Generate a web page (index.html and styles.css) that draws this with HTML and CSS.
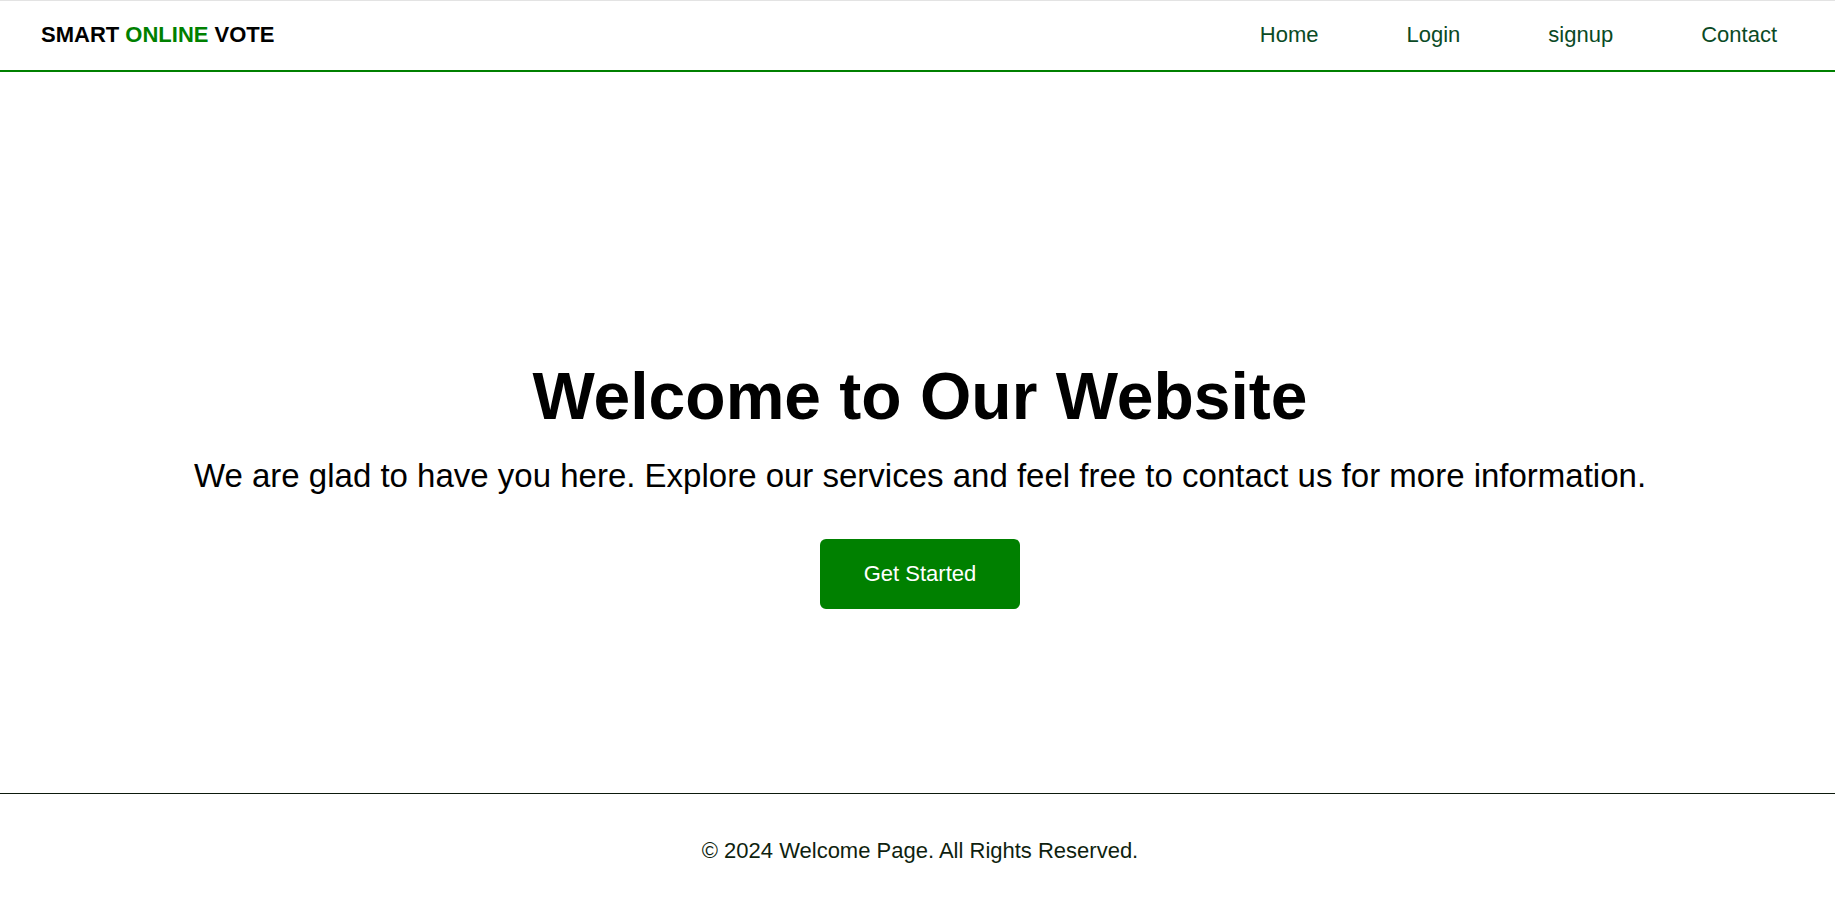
FILE: index.html
```html
<!DOCTYPE html>
<html lang="en">
<head>
<meta charset="utf-8">
<title>Smart Online Vote</title>
<link rel="stylesheet" href="styles.css">
</head>
<body>
<header class="site-header">
  <div class="logo">SMART <span class="logo-accent">ONLINE</span> VOTE</div>
  <nav class="nav">
    <a href="#" class="nav-link">Home</a>
    <a href="#" class="nav-link">Login</a>
    <a href="#" class="nav-link">signup</a>
    <a href="#" class="nav-link">Contact</a>
  </nav>
</header>
<main class="hero">
  <h1 class="hero-title">Welcome to Our Website</h1>
  <p class="hero-text">We are glad to have you here. Explore our services and feel free to contact us for more information.</p>
  <a href="#" class="btn">Get Started</a>
</main>
<footer class="site-footer">
  <p class="footer-text">&copy; 2024 Welcome Page. All Rights Reserved.</p>
</footer>
</body>
</html>
```
FILE: styles.css
```css
* { box-sizing: border-box; }
html, body { margin: 0; padding: 0; }
body {
  font-family: "Liberation Sans", Arial, sans-serif;
  font-size: 22px;
  color: #000;
  background: #fff;
  height: 904px;
  display: flex;
  flex-direction: column;
}
.site-header {
  height: 72px;
  flex: 0 0 72px;
  display: flex;
  align-items: center;
  justify-content: space-between;
  padding: 0 58px 0 41px;
  box-shadow: inset 0 1px 0 #e3e3e3;
  border-bottom: 2px solid #008000;
}
.logo {
  font-weight: bold;
  font-size: 22px;
  color: #000;
}
.logo-accent { color: #008000; }
.nav {
  display: flex;
  gap: 88px;
}
.nav-link {
  color: #0a4a25;
  text-decoration: none;
  font-size: 22px;
}
.hero {
  flex: 1;
  display: flex;
  flex-direction: column;
  align-items: center;
  padding: 286px 0 0 5px;
  text-align: center;
}
.hero-title {
  font-size: 66px;
  font-weight: bold;
  margin: 0 0 23px;
  line-height: normal;
}
.hero-text {
  font-size: 33px;
  margin: 0 0 44px;
  line-height: normal;
}
.btn {
  display: inline-block;
  background: #008000;
  color: #fff;
  text-decoration: none;
  font-size: 22px;
  line-height: 26px;
  padding: 22px 0;
  width: 200px;
  border-radius: 6px;
}
.site-footer {
  flex: 0 0 111px;
  border-top: 1px solid #0d1a0d;
  padding: 44px 0 41px 5px;
  text-align: center;
}
.footer-text {
  margin: 0;
  font-size: 22px;
  line-height: 25px;
  color: #0f1f0f;
}
```
